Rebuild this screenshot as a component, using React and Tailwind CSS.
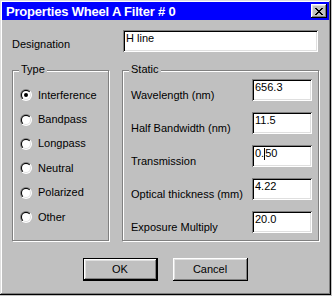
import React from 'react';

const raised = 'shadow-[inset_-1px_-1px_0_#000,inset_1px_1px_0_#fff,inset_-2px_-2px_0_#808080,inset_2px_2px_0_#dfdfdf]';
const sunken = 'shadow-[inset_1px_1px_0_#808080,inset_-1px_-1px_0_#fff,inset_2px_2px_0_#000,inset_-2px_-2px_0_#dfdfdf]';
const etched = 'border border-[#808080] shadow-[inset_1px_1px_0_#fff,1px_1px_0_#fff]';

function Radio({ checked }) {
    return (
        <svg width="12" height="12" viewBox="0 0 12 12" className="shrink-0">
            <defs>
                <linearGradient id="ro" x1="0" y1="0" x2="1" y2="1">
                    <stop offset="0.5" stopColor="#808080" />
                    <stop offset="0.5" stopColor="#ffffff" />
                </linearGradient>
                <linearGradient id="ri" x1="0" y1="0" x2="1" y2="1">
                    <stop offset="0.5" stopColor="#000000" />
                    <stop offset="0.5" stopColor="#dfdfdf" />
                </linearGradient>
            </defs>
            <circle cx="6" cy="6" r="6" fill="url(#ro)" />
            <circle cx="6" cy="6" r="5" fill="url(#ri)" />
            <circle cx="6" cy="6" r="4" fill="#fff" />
            {checked && <circle cx="6" cy="6" r="2" fill="#000" />}
        </svg>
    );
}

function Edit({ children, className }) {
    return (
        <div className={`h-[22px] bg-white pl-[3px] pt-[2px] leading-[13px] text-black ${sunken} ${className}`}>
            {children}
        </div>
    );
}

function Group({ title, className, children }) {
    return (
        <div className={`relative ${etched} ${className}`}>
            <span className="absolute -top-[8px] left-[6px] bg-[#c0c0c0] px-[2px] leading-[13px]">{title}</span>
            {children}
        </div>
    );
}

export default function App() {
    const types = ['Interference', 'Bandpass', 'Longpass', 'Neutral', 'Polarized', 'Other'];
    const fields = [
        ['Wavelength (nm)', '656.3'],
        ['Half Bandwidth (nm)', '11.5'],
        ['Transmission', null],
        ['Optical thickness (mm)', '4.22'],
        ['Exposure Multiply', '20.0'],
    ];

    return (
        <div className="w-[332px] h-[296px] bg-[#c0c0c0] font-['Liberation_Sans',Arial,sans-serif] text-[11px] text-black">
            <div className="w-[331px] h-[295px] p-[2px] flex flex-col shadow-[inset_-1px_-1px_0_#000,inset_1px_1px_0_#dfdfdf,inset_-2px_-2px_0_#808080,inset_2px_2px_0_#fff]">
                {/* title bar */}
                <div className="h-[18px] bg-[#0000ff] flex items-center justify-between pl-[4px] pr-[2px]">
                    <span className="text-white font-bold text-[13px] leading-none tracking-[-0.2px]">Properties Wheel A Filter # 0</span>
                    <div className={`w-[16px] h-[14px] bg-[#c0c0c0] flex items-center justify-center ${raised}`}>
                        <svg width="8" height="7" viewBox="0 0 8 7" shapeRendering="crispEdges">
                            <path fill="#000" d="M0 0h2v1h-2z M6 0h2v1h-2z M1 1h2v1h-2z M5 1h2v1h-2z M2 2h4v1h-4z M3 3h2v1h-2z M2 4h4v1h-4z M1 5h2v1h-2z M5 5h2v1h-2z M0 6h2v1h-2z M6 6h2v1h-2z" />
                        </svg>
                    </div>
                </div>

                <div className="flex flex-col px-[10px]">
                    <div className="flex items-start mt-[10px]">
                        <span className="w-[111px] pt-[8px] leading-[13px]">Designation</span>
                        <Edit className="w-[195px]">H line</Edit>
                    </div>

                    <div className="flex mt-[18px]">
                        <Group title="Type" className="w-[97px] h-[171px]">
                            <div className="flex flex-col pt-[12px]">
                                {types.map((t, i) => (
                                    <div key={t} className="h-[24.4px] flex items-center pl-[7px] gap-[6px]">
                                        <Radio checked={i === 0} />
                                        <span className="leading-[13px]">{t}</span>
                                    </div>
                                ))}
                            </div>
                        </Group>

                        <Group title="Static" className="w-[197px] h-[171px] ml-[13px]">
                            <div className="flex flex-col pt-[8px] pl-[8px] gap-[10px]">
                                {fields.map(([label, value]) => (
                                    <div key={label} className="flex items-start">
                                        <span className="w-[121px] pt-[10px] leading-[13px]">{label}</span>
                                        <Edit className="w-[60px]">
                                            {value ?? (
                                                <span className="inline-flex items-center">0.<span className="inline-block w-px h-[12px] bg-black" />50</span>
                                            )}
                                        </Edit>
                                    </div>
                                ))}
                            </div>
                        </Group>
                    </div>

                    <div className="flex justify-center gap-[15px] mt-[17px] pr-[1px]">
                        <div className="w-[75px] h-[23px] border border-black">
                            <div className={`w-full h-full flex items-center justify-center leading-[13px] ${raised}`}>OK</div>
                        </div>
                        <div className={`w-[75px] h-[23px] flex items-center justify-center leading-[13px] ${raised}`}>Cancel</div>
                    </div>
                </div>
            </div>
        </div>
    );
}
